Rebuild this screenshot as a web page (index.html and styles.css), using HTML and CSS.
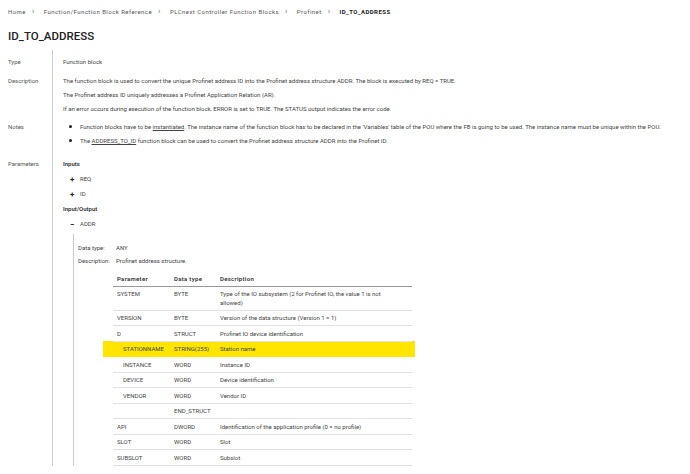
FILE: index.html
```html
<!DOCTYPE html>
<html lang="en">
<head>
    <meta charset="UTF-8">
    <meta name="viewport" content="width=device-width, initial-scale=1.0">
    <title>ID_TO_ADDRESS</title>
    <link rel="stylesheet" href="styles.css">
</head>
<body>
    <nav class="crumbs">
        <span>Home</span><span class="sep">&#x203A;</span>
        <span>Function/Function Block Reference</span><span class="sep">&#x203A;</span>
        <span>PLCnext Controller Function Blocks</span><span class="sep">&#x203A;</span>
        <span>Profinet</span><span class="sep">&#x203A;</span>
        <span class="current">ID_TO_ADDRESS</span>
    </nav>

    <h1 class="title">ID_TO_ADDRESS</h1>

    <div class="props">
        <div class="prop-label row-type">Type</div>
        <div class="prop-value row-type">
            <p>Function block</p>
        </div>

        <div class="prop-label row-desc">Description</div>
        <div class="prop-value row-desc">
            <p>The function block is used to convert the unique Profinet address ID into the Profinet address structure ADDR. The block is executed by REQ = TRUE.</p>
            <p>The Profinet address ID uniquely addresses a Profinet Application Relation (AR).</p>
            <p>If an error occurs during execution of the function block, ERROR is set to TRUE. The STATUS output indicates the error code.</p>
        </div>

        <div class="prop-label row-notes">Notes</div>
        <div class="prop-value row-notes">
            <ul class="notes">
                <li>Function blocks have to be <a href="#">instantiated</a>. The instance name of the function block has to be declared in the 'Variables' table of the POU where the FB is going to be used. The instance name must be unique within the POU.</li>
                <li>The <a href="#">ADDRESS_TO_ID</a> function block can be used to convert the Profinet address structure ADDR into the Profinet ID.</li>
            </ul>
        </div>

        <div class="prop-label row-params">Parameters</div>
        <div class="prop-value row-params">
            <h4 class="group">Inputs</h4>
            <div class="param"><span class="toggle">+</span>REQ</div>
            <div class="param"><span class="toggle">+</span>ID</div>

            <h4 class="group">Input/Output</h4>
            <div class="param open"><span class="toggle">&minus;</span>ADDR</div>

            <div class="param-body">
                <div class="meta"><span class="meta-key">Data type:</span><span>ANY</span></div>
                <div class="meta"><span class="meta-key">Description:</span><span>Profinet address structure.</span></div>

                <table class="struct">
                    <thead>
                        <tr><th class="c1">Parameter</th><th class="c2">Data type</th><th>Description</th></tr>
                    </thead>
                    <tbody>
                        <tr><td>SYSTEM</td><td>BYTE</td><td>Type of the IO subsystem (2 for Profinet IO, the value 1 is not allowed)</td></tr>
                        <tr><td>VERSION</td><td>BYTE</td><td>Version of the data structure (Version 1 = 1)</td></tr>
                        <tr><td>D</td><td>STRUCT</td><td>Profinet IO device identification</td></tr>
                        <tr class="hl"><td class="sub">STATIONNAME</td><td>STRING(255)</td><td>Station name</td></tr>
                        <tr><td class="sub">INSTANCE</td><td>WORD</td><td>Instance ID</td></tr>
                        <tr><td class="sub">DEVICE</td><td>WORD</td><td>Device identification</td></tr>
                        <tr><td class="sub">VENDOR</td><td>WORD</td><td>Vendor ID</td></tr>
                        <tr><td></td><td>END_STRUCT</td><td></td></tr>
                        <tr><td>API</td><td>DWORD</td><td>Identification of the application profile (0 = no profile)</td></tr>
                        <tr><td>SLOT</td><td>WORD</td><td>Slot</td></tr>
                        <tr><td>SUBSLOT</td><td>WORD</td><td>Subslot</td></tr>
                    </tbody>
                </table>
            </div>
        </div>
    </div>
</body>
</html>
```

FILE: styles.css
```css
body {
    font-family: Roboto, "Liberation Sans", sans-serif;
    font-size: 6px;
    line-height: 9px;
    color: #444;
    background-color: #fff;
    margin: 0;
    padding: 0 8px;
}
.crumbs {
    padding-top: 6.5px;
    color: #555;
    letter-spacing: 0.45px;
}
.crumbs .sep {
    display: inline-block;
    margin: 0 7px 0 6px;
    font-size: 8px;
    color: #666;
}
.crumbs .current {
    font-weight: bold;
    color: #222;
}
.title {
    font-size: 11.5px;
    line-height: 16px;
    font-weight: 500;
    color: #222;
    margin: 12px 0 6px;
}
.props {
    display: grid;
    grid-template-columns: 44px 1fr;
}
.prop-label {
    color: #555;
}
.prop-value {
    border-left: 1px solid #ccc;
    padding-left: 10px;
}
.prop-value p {
    margin: 0 0 5px;
}
.row-type {
    padding-top: 7.5px;
}
.row-desc {
    padding-top: 5px;
}
.row-notes {
    padding-top: 4px;
}
.row-params {
    padding-top: 9px;
}
.notes {
    margin: 0 0 5px;
    padding: 0;
    list-style: none;
}
.notes li {
    position: relative;
    padding-left: 17px;
    margin-bottom: 5px;
}
.notes li::before {
    content: "";
    position: absolute;
    left: 6px;
    top: 3px;
    width: 3px;
    height: 3px;
    border-radius: 50%;
    background-color: #222;
}
.notes a {
    color: #444;
    text-decoration: underline;
}
.group {
    margin: 0 0 6px;
    font-size: 6px;
    font-weight: 600;
    color: #333;
}
.param {
    margin: 0 0 6px 7px;
    height: 9px;
}
.toggle {
    display: inline-block;
    width: 10px;
    font-size: 8px;
    line-height: 1;
    font-weight: bold;
    color: #222;
    vertical-align: -1px;
}
.param-body {
    margin-left: 10px;
    border-left: 1px solid #ccc;
    padding: 8.5px 0 0 4px;
}
.meta {
    margin-bottom: 4px;
}
.meta-key {
    display: inline-block;
    width: 38px;
}
.struct {
    margin: 6px 0 0 35px;
    width: 299px;
    border-collapse: collapse;
    color: #444;
}
.struct th {
    text-align: left;
    font-weight: 600;
    color: #333;
    letter-spacing: 0.3px;
    padding: 3px 4px 3px;
    border-bottom: 1px solid #999;
}
.struct th.c1 {
    width: 49px;
}
.struct th.c2 {
    width: 38px;
}
.struct td {
    vertical-align: top;
    padding: 3.5px 4px 2.5px;
    line-height: 8.5px;
    border-bottom: 1px solid #e2e2e2;
}
.struct td:last-child {
    padding-right: 22px;
}
.struct td.sub {
    padding-left: 10px;
}
.struct tr.hl td {
    background-color: #ffe500;
    border-bottom-color: #ffe500;
}
.struct tr.hl td:first-child {
    box-shadow: -10px 0 0 #ffe500;
}
.struct tr.hl td:last-child {
    box-shadow: 3px 0 0 #ffe500;
}
```
